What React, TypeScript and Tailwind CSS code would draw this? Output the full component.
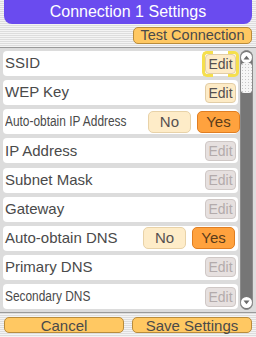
import React from "react";

type Kind = "edit" | "editSel" | "disabled" | "yesno";
const rows: { label: string; kind: Kind; small?: boolean }[] = [
  { label: "SSID", kind: "editSel" },
  { label: "WEP Key", kind: "edit" },
  { label: "Auto-obtain IP Address", kind: "yesno", small: true },
  { label: "IP Address", kind: "disabled" },
  { label: "Subnet Mask", kind: "disabled" },
  { label: "Gateway", kind: "disabled" },
  { label: "Auto-obtain DNS", kind: "yesno" },
  { label: "Primary DNS", kind: "disabled" },
  { label: "Secondary DNS", kind: "disabled", small: true },
];

function EditBtn({ disabled }: { disabled?: boolean }) {
  return (
    <div
      className={
        "w-[31px] h-[20px] rounded-[4px] border flex items-center justify-center text-[14px] leading-none " +
        (disabled
          ? "bg-[#e6e0df] border-[#cfc8c6] text-[#b3abab]"
          : "bg-[#fdebc6] border-[#e2cda6] text-[#555050]")
      }
    >
      Edit
    </div>
  );
}

export default function App() {
  return (
    <div
      className="w-[256px] h-[337px] flex flex-col overflow-hidden bg-[repeating-linear-gradient(to_bottom,#f4f4f4_0px,#f4f4f4_1px,#dddddd_1px,#dddddd_2px)] text-[#4a4a4a]"
      style={{ fontFamily: "'Liberation Sans', Arial, sans-serif" }}
    >
      <div className="mx-[4px] h-[24px] rounded-b-[8px] bg-[#6a4bef] text-white text-[16px] flex items-center justify-center">
        Connection 1 Settings
      </div>
      <div className="flex justify-end pr-[4px] mt-[3px]">
        <div className="w-[119px] h-[17px] rounded-[5px] bg-[#ffc862] border border-[#b98c3c] flex items-center justify-center text-[14.5px] leading-none text-[#4a4a4a]">
          Test Connection
        </div>
      </div>
      <div className="mt-[3px] h-[266px] border-t border-b border-[#9a9a9a] bg-[#dcdcdc] flex">
        <div className="flex flex-col gap-[4.125px] pt-[3px] pl-[3px] w-[238px]">
          {rows.map((r) => (
            <div
              key={r.label}
              className="h-[25px] bg-white rounded-[4px] flex items-center justify-between pl-[2px] pr-[2px]"
            >
              <span
                className={
                  r.small
                    ? "inline-block whitespace-nowrap text-[14px] scale-x-[0.85] origin-left text-[#4a4a4a]"
                    : "text-[15px] text-[#4a4a4a]"
                }
              >
                {r.label}
              </span>
              {r.kind === "edit" && <EditBtn />}
              {r.kind === "disabled" && <EditBtn disabled />}
              {r.kind === "editSel" && (
                <div className="relative">
                  <EditBtn />
                  <div className="absolute left-[-3px] top-[-3px] bottom-[-3px] w-[11px] border-[3px] border-r-0 border-[#f5df4e] rounded-l-[5px]" />
                  <div className="absolute right-[-3px] top-[-3px] bottom-[-3px] w-[11px] border-[3px] border-l-0 border-[#f5df4e] rounded-r-[5px]" />
                </div>
              )}
              {r.kind === "yesno" && (
                <div className="flex gap-[6px] pr-[1px]">
                  <div className="w-[43px] h-[22px] rounded-[5px] bg-[#feecc8] border border-[#e8d2a8] flex items-center justify-center text-[15px] text-[#555050]">
                    No
                  </div>
                  <div className="w-[43px] h-[22px] rounded-[5px] bg-[#ffa23e] border border-[#e07e22] flex items-center justify-center text-[15px] text-[#5a3c1a]">
                    Yes
                  </div>
                </div>
              )}
            </div>
          ))}
        </div>
        <div className="ml-[2px] mt-[2px] mb-[2px] w-[13px] rounded-full bg-[#767676] border border-[#8a8a8a] flex flex-col items-center relative">
          <div className="mt-[1px] w-[11px] h-[11px] rounded-full bg-white flex items-center justify-center">
            <svg width="7" height="5" viewBox="0 0 7 5">
              <path d="M0.5 4.5 L3.5 0.8 L6.5 4.5 Z" fill="#6a6a6a" />
            </svg>
          </div>
          <div className="w-[11px] h-[30px] rounded-[3px] bg-[#f6f6f6] bg-[radial-gradient(circle,#c8c8c8_0.7px,transparent_0.8px)] bg-[length:3px_3px]" />
          <div className="flex-1" />
          <div className="mb-[1px] w-[11px] h-[11px] rounded-full bg-white flex items-center justify-center">
            <svg width="7" height="5" viewBox="0 0 7 5">
              <path d="M0.5 0.5 L3.5 4.2 L6.5 0.5 Z" fill="#6a6a6a" />
            </svg>
          </div>
        </div>
      </div>
      <div className="flex gap-[8px] px-[4px] pt-[4px]">
        <div className="w-[120px] h-[16px] rounded-[5px] bg-[#ffc862] border border-[#b98c3c] flex items-center justify-center text-[15px] leading-none">
          Cancel
        </div>
        <div className="w-[120px] h-[16px] rounded-[5px] bg-[#ffc862] border border-[#b98c3c] flex items-center justify-center text-[15px] leading-none">
          Save Settings
        </div>
      </div>
    </div>
  );
}
